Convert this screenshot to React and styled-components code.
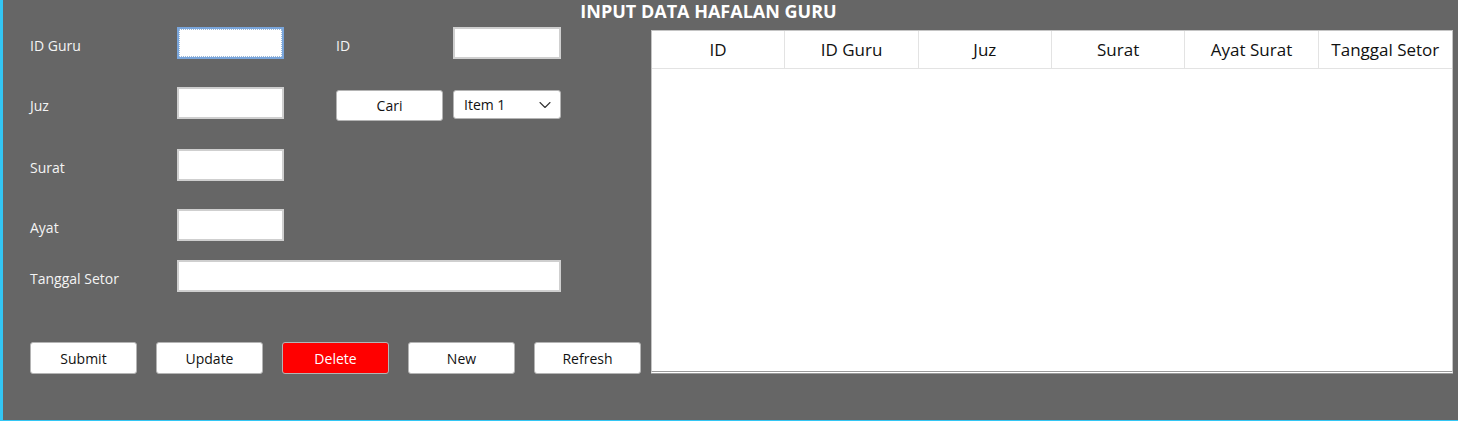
import styled, { createGlobalStyle } from "styled-components";
import { ChevronDown } from "lucide-react";

const GlobalStyle = createGlobalStyle`
  html, body {
    margin: 0;
    padding: 0;
    background: #666666;
  }
  * {
    box-sizing: border-box;
  }
`;

const Frame = styled.div`
  width: 1458px;
  height: 421px;
  background: #666666;
  border-left: 3px solid #33c6f4;
  border-bottom: 1px solid #33c6f4;
  font-family: "Open Sans", "Noto Sans", sans-serif;
  overflow: hidden;
`;

const Title = styled.div`
  height: 24px;
  padding-right: 44px;
  text-align: center;
  color: #ffffff;
  font-size: 18px;
  font-weight: 700;
  line-height: 23px;
`;

const Body = styled.div`
  display: flex;
  align-items: flex-start;
`;

const FormPanel = styled.div`
  width: 648px;
  padding-left: 27px;
  padding-top: 3px;
`;

const FormGrid = styled.div`
  display: grid;
  grid-template-columns: 147px 107px 52px 117px 108px;
  grid-template-rows: 60px 62px 60px 51px 32px;
`;

const Label = styled.div`
  height: 32px;
  display: flex;
  align-items: center;
  padding-top: 4px;
  color: #f4f4f4;
  font-size: 14px;
  grid-column: ${(props) => props.col || "1"};
`;

const Input = styled.input`
  height: 32px;
  width: 100%;
  background: #ffffff;
  border: 2px solid ${(props) => (props.focused ? "#7aa6dc" : "#cfcfcf")};
  outline: ${(props) => (props.focused ? "1px dotted #9bb8d8" : "none")};
  outline-offset: -3px;
  grid-column: ${(props) => props.col || "auto"};
  align-self: start;
`;

const Button = styled.button`
  height: 32px;
  width: 107px;
  border: 1px solid #b4b4b4;
  border-radius: 3px;
  background: ${(props) => (props.danger ? "#ff0000" : "#ffffff")};
  color: ${(props) => (props.danger ? "#ffffff" : "#111111")};
  font-family: "Open Sans", "Noto Sans", sans-serif;
  font-size: 14px;
  padding: 0;
  cursor: pointer;
`;

const SearchButton = styled(Button)`
  margin-top: 3px;
  height: 31px;
  grid-column: 4;
`;

const Select = styled.div`
  margin-top: 3px;
  height: 29px;
  width: 108px;
  background: #ffffff;
  border: 1px solid #b4b4b4;
  border-radius: 3px;
  display: flex;
  align-items: center;
  justify-content: space-between;
  padding: 0 5px 0 10px;
  font-size: 14px;
  color: #111111;
`;

const ButtonRow = styled.div`
  display: flex;
  gap: 19px;
  margin-top: 50px;
`;

const TableBox = styled.div`
  margin-top: 6px;
  width: 802px;
  height: 344px;
  background: #ffffff;
  border: 1px solid #c4c4c4;
  border-bottom: 3px double #9a9a9a;
`;

const HeaderRow = styled.div`
  display: grid;
  grid-template-columns: repeat(6, 1fr);
  height: 38px;
  border-bottom: 1px solid #e3e3e3;
`;

const HeaderCell = styled.div`
  display: flex;
  align-items: center;
  justify-content: center;
  font-size: 17px;
  color: #111111;
  border-right: ${(props) => (props.last ? "none" : "1px solid #e3e3e3")};
  white-space: nowrap;
`;

const columns = ["ID", "ID Guru", "Juz", "Surat", "Ayat Surat", "Tanggal Setor"];
const actions = ["Submit", "Update", "Delete", "New", "Refresh"];

export default function App() {
  return (
    <>
      <GlobalStyle />
      <Frame>
        <Title>INPUT DATA HAFALAN GURU</Title>
        <Body>
          <FormPanel>
            <FormGrid>
              <Label>ID Guru</Label>
              <Input focused />
              <Label col="4">ID</Label>
              <Input />

              <Label>Juz</Label>
              <Input />
              <SearchButton>Cari</SearchButton>
              <Select>
                <span>Item 1</span>
                <ChevronDown size={20} strokeWidth={1.3} color="#333" />
              </Select>

              <Label>Surat</Label>
              <Input />

              <Label>Ayat</Label>
              <Input />

              <Label>Tanggal Setor</Label>
              <Input col="2 / 6" />
            </FormGrid>
            <ButtonRow>
              {actions.map((a) => (
                <Button key={a} danger={a === "Delete"}>
                  {a}
                </Button>
              ))}
            </ButtonRow>
          </FormPanel>
          <TableBox>
            <HeaderRow>
              {columns.map((c, i) => (
                <HeaderCell key={c} last={i === columns.length - 1}>
                  {c}
                </HeaderCell>
              ))}
            </HeaderRow>
          </TableBox>
        </Body>
      </Frame>
    </>
  );
}
